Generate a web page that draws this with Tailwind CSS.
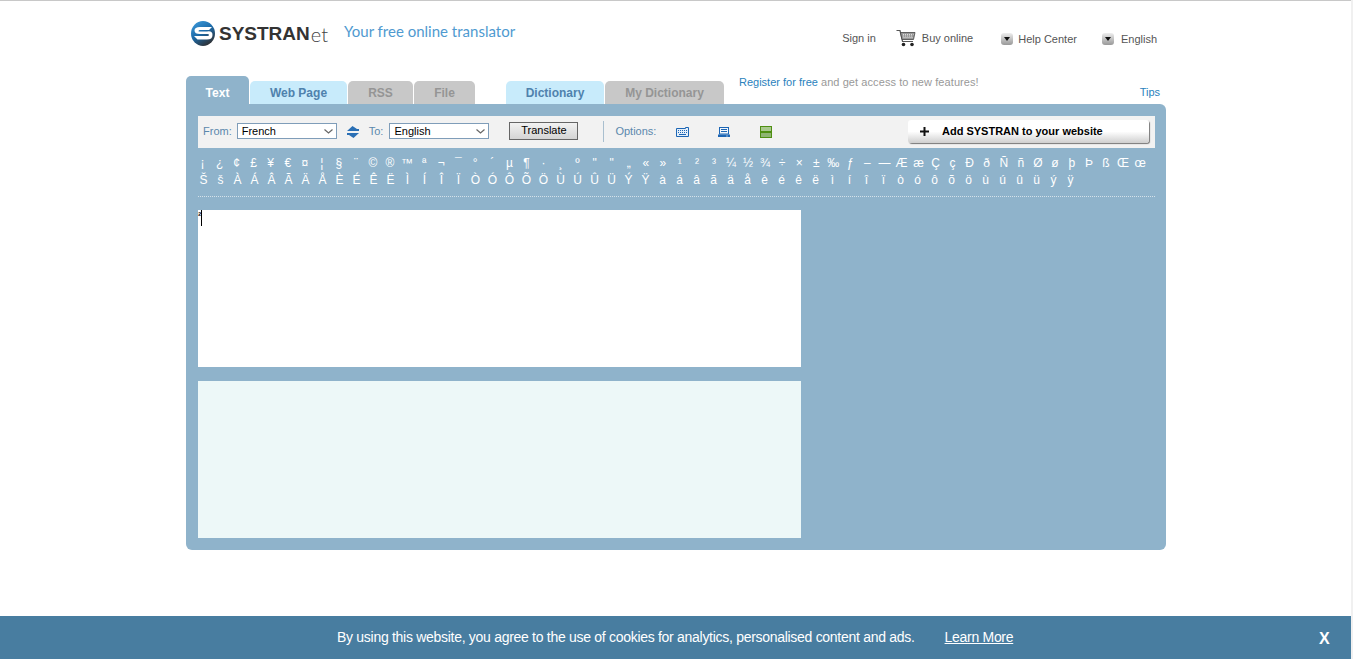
<!DOCTYPE html>
<html lang="en">
<head>
  <meta charset="UTF-8" />
  <title>SYSTRANet</title>
  <script src="https://cdn.jsdelivr.net/npm/@tailwindcss/browser@4"></script>
</head>
<body class="bg-white font-['Liberation_Sans',Arial,sans-serif] h-[659px] overflow-hidden flex flex-col border-r-2 border-[#f0f0f0]">
  <div class="h-px bg-[#c8c8c8]"></div>

  <div class="w-[980px] ml-[186px] flex-1 min-h-0">
    <!-- header -->
    <div class="h-[54px] flex items-start justify-between">
      <div class="flex items-center pl-[5px] pt-[20px]">
        <svg width="24" height="25" viewBox="0 0 24 25">
          <defs>
            <linearGradient id="globe" x1="0" y1="0" x2="0.6" y2="1">
              <stop offset="0" stop-color="#3f9fe0" />
              <stop offset="0.55" stop-color="#1c6aa8" />
              <stop offset="1" stop-color="#2e3338" />
            </linearGradient>
          </defs>
          <ellipse cx="12" cy="12.500" rx="12" ry="12.500" fill="url(#globe)" />
          <path d="M21 6H9Q3.500 6 3.500 9.500T9 13H16.500Q18 13 18 14T16.500 15H3L6.500 18.500H16Q21.500 18.500 21.500 14T16 10.500H8.500Q7.500 10.500 7.500 10T8.500 9H18z" fill="#fff" />
        </svg>
        <span class="ml-[4px] text-[19px] font-bold text-[#333] leading-none">SYSTRAN</span><span class="ml-[1px] text-[20px] font-light text-[#444] leading-none font-['Lato',sans-serif] pt-[1px]">et</span>
        <span class="ml-[16px] text-[15px] text-[#4f9ad0] font-['Lato',sans-serif] leading-none -mt-[4px]">Your free online translator</span>
      </div>
      <nav class="flex items-start text-[11px] text-[#555] pt-[29px] pr-[9px]">
        <a class="mr-[20px]">Sign in</a>
        <svg class="-mt-[1px]" width="20" height="18" viewBox="0 0 20 18" fill="none">
          <path d="M0.500 1.500H4L6.500 12.500H17" stroke="#555" stroke-width="1.200" />
          <path d="M4.500 3.500H19L17.500 10.500H6z" fill="#999" stroke="#444" stroke-width="0.800" />
          <path d="M7 5.500H17.500M7 7H17M7.500 8.500H16.500" stroke="#eee" stroke-width="0.800" stroke-dasharray="1 1" />
          <circle cx="7.500" cy="15.500" r="1.800" fill="#222" />
          <circle cx="16" cy="15.500" r="1.800" fill="#222" />
        </svg>
        <a class="ml-[6px] mr-[28px]">Buy online</a>
        <span class="mt-[3px] w-[12px] h-[12px] rounded-[3px] bg-gradient-to-b from-[#eee] to-[#999] flex items-center justify-center">
          <svg width="6" height="4" viewBox="0 0 6 4"><path d="M0 0H6L3 4z" fill="#111" /></svg>
        </span>
        <a class="ml-[5px] mr-[25px] mt-[1px]">Help Center</a>
        <span class="mt-[3px] w-[12px] h-[12px] rounded-[3px] bg-gradient-to-b from-[#eee] to-[#999] flex items-center justify-center">
          <svg width="6" height="4" viewBox="0 0 6 4"><path d="M0 0H6L3 4z" fill="#111" /></svg>
        </span>
        <a class="ml-[7px] mt-[1px]">English</a>
      </nav>
    </div>

    <!-- tabs -->
    <div class="h-[49px] flex items-end text-[12px] font-bold relative">
      <a class="w-[63px] h-[28px] mr-px rounded-t-[5px] bg-[#8fb3cb] text-white flex items-center justify-center pt-[5px]">Text</a>
      <a class="w-[97px] h-[23px] mr-px rounded-t-[5px] bg-[#c8ebfb] text-[#4f82ad] flex items-center justify-center">Web Page</a>
      <a class="w-[65px] h-[23px] mr-px rounded-t-[5px] bg-[#c8c8c8] text-[#959595] flex items-center justify-center">RSS</a>
      <a class="w-[61px] h-[23px] mr-[31px] rounded-t-[5px] bg-[#c8c8c8] text-[#959595] flex items-center justify-center">File</a>
      <a class="w-[98px] h-[23px] mr-px rounded-t-[5px] bg-[#c8ebfb] text-[#4f82ad] flex items-center justify-center">Dictionary</a>
      <a class="w-[119px] h-[23px] rounded-t-[5px] bg-[#c8c8c8] text-[#959595] flex items-center justify-center">My Dictionary</a>
      <p class="self-start ml-[15px] mt-[19px] text-[11px] font-normal text-[#999]"><a class="text-[#2a82bd]">Register for free</a> <span class="tracking-[0.08px]">and get access to new features!</span></p>
      <a class="absolute right-[6px] text-[11px] font-normal text-[#2a82bd] pb-[4px]">Tips</a>
    </div>

    <!-- main panel -->
    <div class="h-[446px] rounded-[6px] rounded-tl-none bg-[#8fb3cb] px-[12px] pt-[12px]">
      <div class="w-[957px] h-[32px] bg-[#f2f2f2] flex items-center text-[11px] pb-[2px]">
        <label class="ml-[5px] text-[#5b88ad]">From:</label>
        <select class="ml-[5px] w-[100px] h-[16px] bg-white border border-[#7f9db9] text-[11px] leading-none text-black pl-[4px] appearance-none"><option>French</option></select>
        <svg class="-ml-[13px] pointer-events-none" width="9" height="5" viewBox="0 0 9 5" fill="none"><path d="M0.500 0.500L4.500 4L8.500 0.500" stroke="#666" stroke-width="1.200" /></svg>
        <svg class="ml-[14px] mt-[2px]" width="12" height="12" viewBox="0 0 12 12"><path d="M5.500 0L10 3H12V5H0L5.500 0z" fill="#2a6fb5" /><path d="M6.500 12L2 9H0V7H12L6.500 12z" fill="#2a6fb5" /></svg>
        <label class="ml-[10px] text-[#5b88ad]">To:</label>
        <select class="ml-[6px] w-[100px] h-[16px] bg-white border border-[#7f9db9] text-[11px] leading-none text-black pl-[4px] appearance-none"><option>English</option></select>
        <svg class="-ml-[13px] pointer-events-none" width="9" height="5" viewBox="0 0 9 5" fill="none"><path d="M0.500 0.500L4.500 4L8.500 0.500" stroke="#666" stroke-width="1.200" /></svg>
        <button class="ml-[24px] w-[69px] h-[18px] pb-[2px] border border-[#666] bg-gradient-to-b from-[#f2f2f2] to-[#d4d4d4] text-[11px] text-black leading-none">Translate</button>
        <span class="ml-[25px] w-px h-[21px] bg-[#a9bfcf]"></span>
        <label class="ml-[11px] text-[#5b88ad]">Options:</label>
        <svg class="ml-[20px] mt-[2px]" width="13" height="10" viewBox="0 0 13 10" fill="none"><path d="M0.500 1.500H9.500V0.500H12.500V9.500H0.500z" fill="#e3eefa" stroke="#1d66b5" /><path d="M2 3.500H11M2 5.500H11" stroke="#1d66b5" stroke-dasharray="1 1" /><path d="M3 7.500H10" stroke="#1d66b5" /></svg>
        <svg class="ml-[29px] mt-[2px]" width="12" height="10" viewBox="0 0 12 10" fill="none"><rect x="1.500" y="0.500" width="9" height="6.500" fill="#f2f6fb" stroke="#1d66b5" /><path d="M3 2.500H9M3 4.500H9" stroke="#1d66b5" /><rect x="0" y="7.500" width="12" height="2.500" fill="#1d66b5" /><rect x="8.500" y="8.500" width="1" height="1" fill="#fff" /></svg>
        <svg class="ml-[30px] mt-[2px]" width="12" height="12" viewBox="0 0 12 12"><rect width="12" height="12" fill="#4f8f12" /><rect x="1" y="1" width="10" height="4" fill="#a9c98e" /><rect x="1" y="7" width="10" height="4" fill="#8fb573" /></svg>
        <div class="ml-auto mr-[6px] mt-[1px] w-[241px] h-[23px] rounded-[3px] bg-gradient-to-b from-[#ffffff] via-[#ffffff] to-[#cfcfcf] shadow-[1px_1px_1px_#777] flex items-center">
          <svg class="ml-[12px]" width="9" height="9" viewBox="0 0 9 9"><path d="M3.500 0H5.500V3.500H9V5.500H5.500V9H3.500V5.500H0V3.500H3.500z" fill="#111" /></svg>
          <span class="ml-[13px] font-bold text-black">Add SYSTRAN to your website</span>
        </div>
      </div>

      <!-- special characters -->
      <div class="w-[957px] h-[49px] border-b border-dotted border-[#d5e2ea] pt-[6px] text-[12px] leading-[18px] text-white">
        <div class="flex -ml-[4px]">
          <span class="w-[17.05px] shrink-0 text-center">¡</span><span class="w-[17.05px] shrink-0 text-center">¿</span><span class="w-[17.05px] shrink-0 text-center">¢</span><span class="w-[17.05px] shrink-0 text-center">£</span><span class="w-[17.05px] shrink-0 text-center">¥</span><span class="w-[17.05px] shrink-0 text-center">€</span><span class="w-[17.05px] shrink-0 text-center">¤</span><span class="w-[17.05px] shrink-0 text-center">¦</span><span class="w-[17.05px] shrink-0 text-center">§</span><span class="w-[17.05px] shrink-0 text-center">¨</span><span class="w-[17.05px] shrink-0 text-center">©</span><span class="w-[17.05px] shrink-0 text-center">®</span><span class="w-[17.05px] shrink-0 text-center">™</span><span class="w-[17.05px] shrink-0 text-center">ª</span><span class="w-[17.05px] shrink-0 text-center">¬</span><span class="w-[17.05px] shrink-0 text-center">¯</span><span class="w-[17.05px] shrink-0 text-center">°</span><span class="w-[17.05px] shrink-0 text-center">´</span><span class="w-[17.05px] shrink-0 text-center">µ</span><span class="w-[17.05px] shrink-0 text-center">¶</span><span class="w-[17.05px] shrink-0 text-center">·</span><span class="w-[17.05px] shrink-0 text-center">¸</span><span class="w-[17.05px] shrink-0 text-center">º</span><span class="w-[17.05px] shrink-0 text-center">"</span><span class="w-[17.05px] shrink-0 text-center">"</span><span class="w-[17.05px] shrink-0 text-center">„</span><span class="w-[17.05px] shrink-0 text-center">«</span><span class="w-[17.05px] shrink-0 text-center">»</span><span class="w-[17.05px] shrink-0 text-center">¹</span><span class="w-[17.05px] shrink-0 text-center">²</span><span class="w-[17.05px] shrink-0 text-center">³</span><span class="w-[17.05px] shrink-0 text-center">¼</span><span class="w-[17.05px] shrink-0 text-center">½</span><span class="w-[17.05px] shrink-0 text-center">¾</span><span class="w-[17.05px] shrink-0 text-center">÷</span><span class="w-[17.05px] shrink-0 text-center">×</span><span class="w-[17.05px] shrink-0 text-center">±</span><span class="w-[17.05px] shrink-0 text-center">‰</span><span class="w-[17.05px] shrink-0 text-center">ƒ</span><span class="w-[17.05px] shrink-0 text-center">–</span><span class="w-[17.05px] shrink-0 text-center">—</span><span class="w-[17.05px] shrink-0 text-center">Æ</span><span class="w-[17.05px] shrink-0 text-center">æ</span><span class="w-[17.05px] shrink-0 text-center">Ç</span><span class="w-[17.05px] shrink-0 text-center">ç</span><span class="w-[17.05px] shrink-0 text-center">Ð</span><span class="w-[17.05px] shrink-0 text-center">ð</span><span class="w-[17.05px] shrink-0 text-center">Ñ</span><span class="w-[17.05px] shrink-0 text-center">ñ</span><span class="w-[17.05px] shrink-0 text-center">Ø</span><span class="w-[17.05px] shrink-0 text-center">ø</span><span class="w-[17.05px] shrink-0 text-center">þ</span><span class="w-[17.05px] shrink-0 text-center">Þ</span><span class="w-[17.05px] shrink-0 text-center">ß</span><span class="w-[17.05px] shrink-0 text-center">Œ</span><span class="w-[17.05px] shrink-0 text-center">œ</span>
        </div>
        <div class="flex -ml-[3px] -mt-px">
          <span class="w-[17px] shrink-0 text-center">Š</span><span class="w-[17px] shrink-0 text-center">š</span><span class="w-[17px] shrink-0 text-center">À</span><span class="w-[17px] shrink-0 text-center">Á</span><span class="w-[17px] shrink-0 text-center">Â</span><span class="w-[17px] shrink-0 text-center">Ã</span><span class="w-[17px] shrink-0 text-center">Ä</span><span class="w-[17px] shrink-0 text-center">Å</span><span class="w-[17px] shrink-0 text-center">È</span><span class="w-[17px] shrink-0 text-center">É</span><span class="w-[17px] shrink-0 text-center">Ê</span><span class="w-[17px] shrink-0 text-center">Ë</span><span class="w-[17px] shrink-0 text-center">Ì</span><span class="w-[17px] shrink-0 text-center">Í</span><span class="w-[17px] shrink-0 text-center">Î</span><span class="w-[17px] shrink-0 text-center">Ï</span><span class="w-[17px] shrink-0 text-center">Ò</span><span class="w-[17px] shrink-0 text-center">Ó</span><span class="w-[17px] shrink-0 text-center">Ô</span><span class="w-[17px] shrink-0 text-center">Õ</span><span class="w-[17px] shrink-0 text-center">Ö</span><span class="w-[17px] shrink-0 text-center">Ù</span><span class="w-[17px] shrink-0 text-center">Ú</span><span class="w-[17px] shrink-0 text-center">Û</span><span class="w-[17px] shrink-0 text-center">Ü</span><span class="w-[17px] shrink-0 text-center">Ý</span><span class="w-[17px] shrink-0 text-center">Ÿ</span><span class="w-[17px] shrink-0 text-center">à</span><span class="w-[17px] shrink-0 text-center">á</span><span class="w-[17px] shrink-0 text-center">â</span><span class="w-[17px] shrink-0 text-center">ã</span><span class="w-[17px] shrink-0 text-center">ä</span><span class="w-[17px] shrink-0 text-center">å</span><span class="w-[17px] shrink-0 text-center">è</span><span class="w-[17px] shrink-0 text-center">é</span><span class="w-[17px] shrink-0 text-center">ê</span><span class="w-[17px] shrink-0 text-center">ë</span><span class="w-[17px] shrink-0 text-center">ì</span><span class="w-[17px] shrink-0 text-center">í</span><span class="w-[17px] shrink-0 text-center">î</span><span class="w-[17px] shrink-0 text-center">ï</span><span class="w-[17px] shrink-0 text-center">ò</span><span class="w-[17px] shrink-0 text-center">ó</span><span class="w-[17px] shrink-0 text-center">ô</span><span class="w-[17px] shrink-0 text-center">õ</span><span class="w-[17px] shrink-0 text-center">ö</span><span class="w-[17px] shrink-0 text-center">ù</span><span class="w-[17px] shrink-0 text-center">ú</span><span class="w-[17px] shrink-0 text-center">û</span><span class="w-[17px] shrink-0 text-center">ü</span><span class="w-[17px] shrink-0 text-center">ý</span><span class="w-[17px] shrink-0 text-center">ÿ</span>
        </div>
      </div>

      <!-- text areas -->
      <div class="w-[603px] h-[157px] mt-[13px] bg-white relative">
        <span class="absolute left-0 top-[1px] text-[10px] font-bold leading-[10px] text-black">²</span>
        <span class="absolute left-[3px] top-0 w-px h-[16px] bg-black"></span>
      </div>
      <div class="w-[603px] h-[157px] mt-[14px] bg-[#edf8f8]"></div>
    </div>
  </div>

  <!-- cookie banner -->
  <div class="h-[43px] bg-[#487da0] flex items-center text-white text-[14px] tracking-[-0.29px] relative">
    <span class="ml-[337px]">By using this website, you agree to the use of cookies for analytics, personalised content and ads.</span>
    <a class="ml-[30px] underline">Learn More</a>
    <span class="absolute left-[1319px] top-[13px] text-[16px] font-bold leading-[20px]">X</span>
  </div>
</body>
</html>
